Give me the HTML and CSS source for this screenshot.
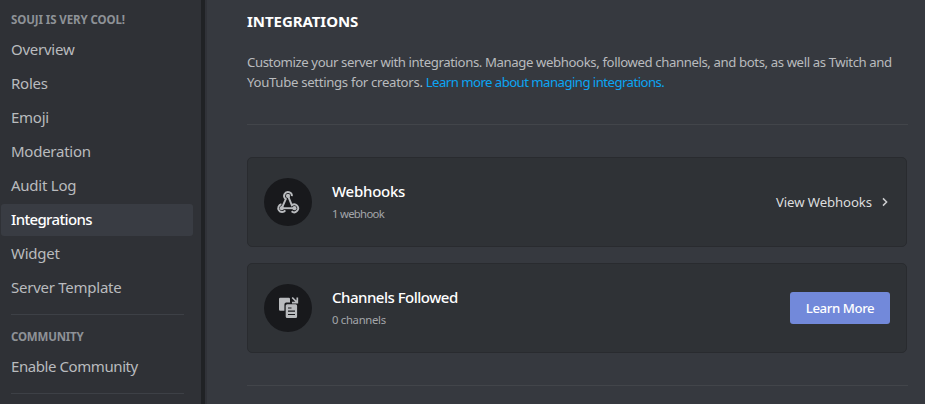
FILE: index.html
```html
<!DOCTYPE html>
<html lang="en">
<head>
<meta charset="utf-8">
<title>Integrations</title>
<link rel="stylesheet" href="styles.css">
</head>
<body>
<div class="app">
  <nav class="sidebar">
    <h2 class="heading server">SOUJI IS VERY COOL!</h2>
    <a class="item">Overview</a>
    <a class="item">Roles</a>
    <a class="item">Emoji</a>
    <a class="item">Moderation</a>
    <a class="item">Audit Log</a>
    <a class="item active">Integrations</a>
    <a class="item">Widget</a>
    <a class="item">Server Template</a>
    <div class="separator"></div>
    <h2 class="heading community">COMMUNITY</h2>
    <a class="item enable">Enable Community</a>
    <div class="separator"></div>
  </nav>
  <div class="scrollbar"></div>
  <main class="content">
    <h1 class="title">INTEGRATIONS</h1>
    <p class="intro"><span class="line-one">Customize your server with integrations. Manage webhooks, followed channels, and bots, as well as Twitch and</span><br><span class="line-two">YouTube settings for creators. </span><a class="link">Learn more about managing integrations.</a></p>
    <div class="divider"></div>
    <section class="card">
      <div class="badge">
        <svg width="24" height="24" viewBox="0 0 24 24" fill="none" stroke="#b9bbbe" stroke-width="1.9">
          <path d="M15.9 6.2A3.9 3.9 0 1 0 9.8 9.1L5.8 18"/>
          <path d="M12 5.9L15.8 15.2A3.9 3.9 0 1 1 15.6 21.2"/>
          <path d="M5.4 14.3A3.9 3.9 0 1 0 9.3 20.4"/>
          <path d="M5.8 18.2H18.4"/>
          <g fill="#b9bbbe" stroke="none"><circle cx="12" cy="5.9" r="2.1"/><circle cx="5.8" cy="18.2" r="2.1"/><circle cx="18.4" cy="18.2" r="2.1"/></g>
        </svg>
      </div>
      <div class="info">
        <h3 class="name webhooks">Webhooks</h3>
        <div class="count one">1 webhook</div>
      </div>
      <a class="view">View Webhooks</a>
      <svg class="chevron" width="8" height="10" viewBox="0 0 8 10" fill="none" stroke="#cccdcf" stroke-width="1.5"><path d="M2 1.4L5.6 5L2 8.6"/></svg>
    </section>
    <section class="card">
      <div class="badge">
        <svg width="24" height="24" viewBox="0 0 24 24" fill="#b9bbbe">
          <path d="M4.3 1.7H12.9Q14 1.7 14 3V6.6H10.3Q8.4 6.6 8.4 8.5V14.8H4.3Q3 14.8 3 13.5V3Q3 1.7 4.3 1.7Z"/>
          <path fill-rule="evenodd" d="M11.2 8.3H19.6Q21.1 8.3 21.1 9.8V20.5Q21.1 22 19.6 22H11.2Q9.7 22 9.7 20.5V9.8Q9.7 8.3 11.2 8.3ZM12 11.4V12.5H15.5V11.4ZM12 14.6V15.7H19V14.6ZM12 17.9V19H19V17.9Z"/>
          <path d="M16.2 1.5L20.6 5.9M21.3 1.6V6.6H16" fill="none" stroke="#b9bbbe" stroke-width="1.7"/>
        </svg>
      </div>
      <div class="info">
        <h3 class="name channels">Channels Followed</h3>
        <div class="count">0 channels</div>
      </div>
      <button class="button">Learn More</button>
    </section>
    <div class="divider"></div>
  </main>
</div>
</body>
</html>
```
FILE: styles.css
```css
* { box-sizing: border-box; }
body {
  margin: 0;
  font-family: "Noto Sans", sans-serif;
  background: #36393f;
  overflow: hidden;
}
h1, h2, h3, p { margin: 0; }
.app { display: flex; height: 404px; overflow: hidden; }
.sidebar { width: 201px; flex: none; padding: 12px 8px 0 1px; background: #2f3136; }
.heading {
  height: 16px;
  margin-left: 10px;
  font-size: 11.5px;
  line-height: 16px;
  font-weight: 700;
  color: #8e9297;
  white-space: nowrap;
}
.server { margin-bottom: 6px; letter-spacing: -0.1px; }
.community { margin-bottom: 6px; letter-spacing: -0.2px; }
.item {
  display: block;
  height: 32px;
  margin-bottom: 2px;
  padding-left: 10px;
  border-radius: 3px;
  font-size: 15px;
  line-height: 31px;
  letter-spacing: -0.25px;
  color: #b9bbbe;
  white-space: nowrap;
}
.active { background: #393c43; color: #fff; font-weight: 500; letter-spacing: -0.65px; }
.enable { letter-spacing: -0.42px; }
.separator { height: 1px; margin: 10px 9px 14px 10px; background: #3d4046; }
.scrollbar { width: 6px; flex: none; background: #202225; border-right: 2px solid #303238; }
.content { flex: none; width: 718px; padding: 11px 17px 0 40px; }
.title { font-size: 15px; line-height: 20px; font-weight: 700; color: #fff; letter-spacing: -0.05px; }
.intro {
  height: 40px;
  margin-top: 21px;
  font-size: 13.2px;
  line-height: 20px;
  color: #b9bbbe;
  white-space: nowrap;
}
.line-one { letter-spacing: -0.4px; }
.line-two { letter-spacing: -0.32px; }
.link { color: #0ba5f3; letter-spacing: -0.55px; }
.divider { width: 661px; height: 1px; margin: 32px 0; background: #42454a; }
.card {
  display: flex;
  align-items: center;
  width: 660px;
  height: 90px;
  margin-bottom: 16px;
  padding: 0 16px;
  border: 1px solid #292b2f;
  border-radius: 5px;
  background: #2f3236;
}
.card + .divider { margin-top: 32px; }
.badge {
  display: grid;
  place-items: center;
  width: 48px;
  height: 48px;
  border-radius: 50%;
  background: #18191c;
}
.info { flex: 1; margin-left: 20px; padding-bottom: 1px; }
.name { font-size: 15px; line-height: 20px; font-weight: 500; color: #fff; }
.webhooks { letter-spacing: -0.25px; }
.channels { letter-spacing: -0.5px; }
.count { margin-top: 5px; font-size: 11.3px; line-height: 16px; letter-spacing: -0.3px; color: #a3a6aa; }
.one { letter-spacing: -0.7px; }
.view { font-size: 13.2px; line-height: 20px; letter-spacing: -0.1px; color: #dcddde; }
.chevron { margin: 0 1px 0 9px; }
.button {
  width: 100px;
  height: 32px;
  padding: 0;
  border: 0;
  border-radius: 3px;
  background: #7289da;
  color: #fff;
  font: 500 13.2px/32px "Noto Sans", sans-serif;
  letter-spacing: -0.4px;
}
```
